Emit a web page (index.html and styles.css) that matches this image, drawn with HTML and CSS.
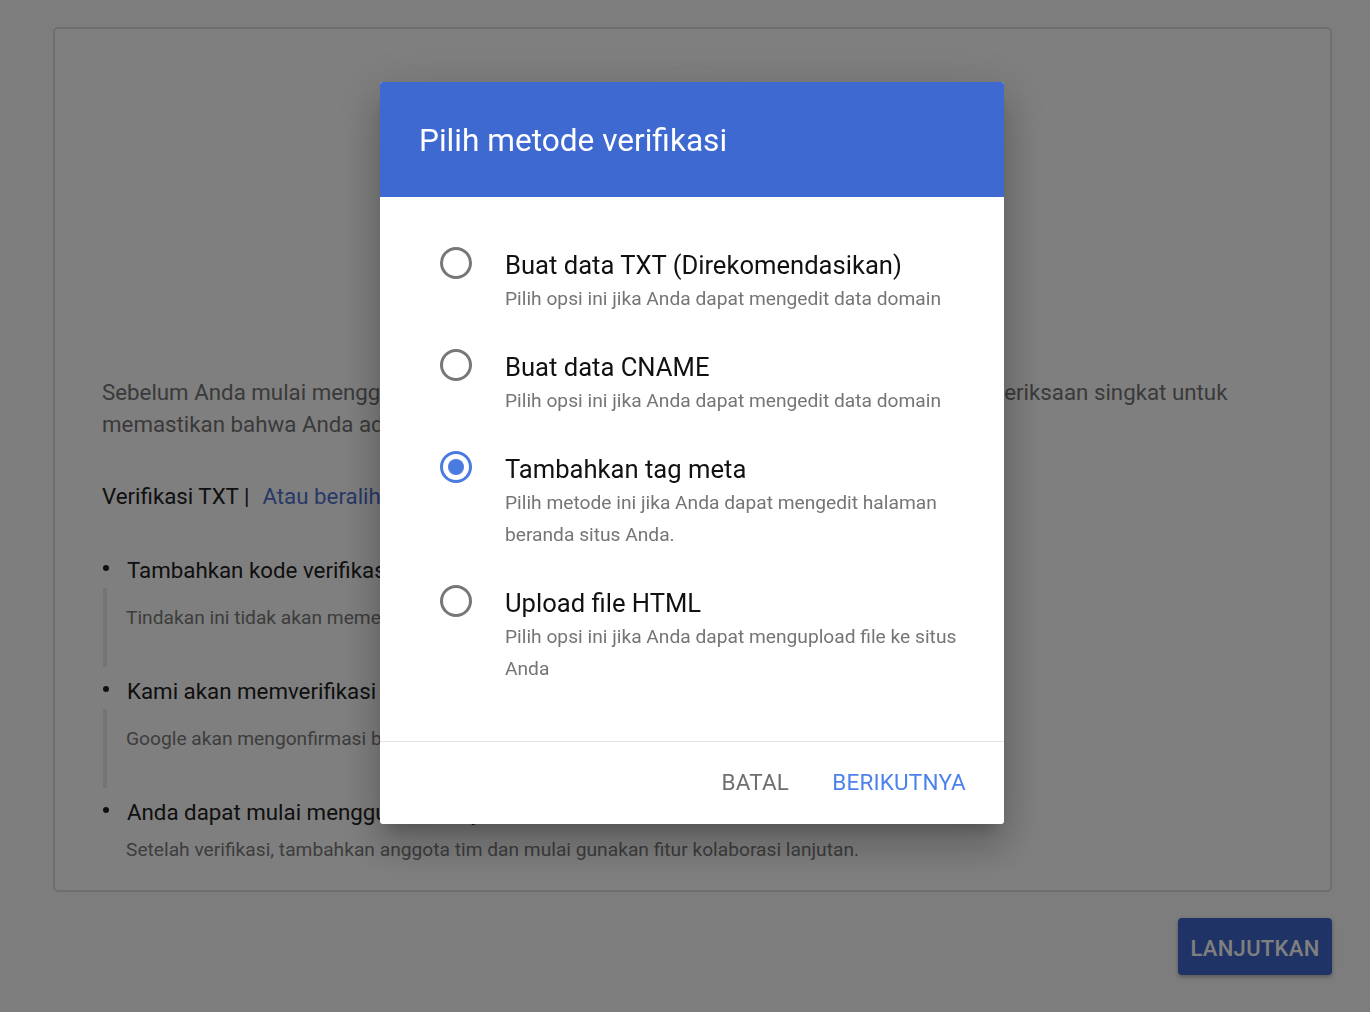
FILE: index.html
```html
<!DOCTYPE html>
<html lang="id">
<head>
<meta charset="utf-8">
<title>Verifikasi domain</title>
<link rel="stylesheet" href="styles.css">
</head>
<body>
<main class="page">
  <section class="card">
    <div class="logo-wrap"><div class="logo"></div></div>
    <p class="intro">Sebelum Anda mulai menggunakan layanan ini pada domain ini, kami perlu melakukan pemeriksaan singkat untuk<br>memastikan bahwa Anda adalah pemilik domain ini.</p>
    <div class="method-row">
      <span class="method">Verifikasi TXT |</span>
      <a class="switch" href="#">Atau beralih ke metode verifikasi lain</a>
    </div>
    <ul class="steps">
      <li class="step">
        <div class="step-title">Tambahkan kode verifikasi ke data DNS domain Anda</div>
        <div class="step-note bordered">Tindakan ini tidak akan memengaruhi situs atau email Anda.</div>
      </li>
      <li class="step">
        <div class="step-title">Kami akan memverifikasi kepemilikan domain Anda</div>
        <div class="step-note bordered">Google akan mengonfirmasi bahwa Anda adalah pemilik domain.</div>
      </li>
      <li class="step">
        <div class="step-title">Anda dapat mulai menggunakan layanan setelah diverifikasi</div>
        <div class="step-note">Setelah verifikasi, tambahkan anggota tim dan mulai gunakan fitur kolaborasi lanjutan.</div>
      </li>
    </ul>
  </section>
  <div class="actions">
    <button class="primary" type="button">LANJUTKAN</button>
  </div>
</main>

<div class="overlay">
  <div class="dialog" role="dialog">
    <header class="dialog-head">Pilih metode verifikasi</header>
    <div class="dialog-body">
      <label class="option">
        <span class="radio"></span>
        <span class="option-text">
          <span class="option-title">Buat data TXT (Direkomendasikan)</span>
          <span class="option-desc">Pilih opsi ini jika Anda dapat mengedit data domain</span>
        </span>
      </label>
      <label class="option">
        <span class="radio"></span>
        <span class="option-text">
          <span class="option-title">Buat data CNAME</span>
          <span class="option-desc">Pilih opsi ini jika Anda dapat mengedit data domain</span>
        </span>
      </label>
      <label class="option">
        <span class="radio checked"></span>
        <span class="option-text">
          <span class="option-title">Tambahkan tag meta</span>
          <span class="option-desc">Pilih metode ini jika Anda dapat mengedit halaman beranda situs Anda.</span>
        </span>
      </label>
      <label class="option">
        <span class="radio"></span>
        <span class="option-text">
          <span class="option-title">Upload file HTML</span>
          <span class="option-desc">Pilih opsi ini jika Anda dapat mengupload file ke situs Anda</span>
        </span>
      </label>
    </div>
    <footer class="dialog-foot">
      <button class="text-btn cancel" type="button">BATAL</button>
      <button class="text-btn next" type="button">BERIKUTNYA</button>
    </footer>
  </div>
</div>
</body>
</html>
```
FILE: styles.css
```css
* { box-sizing: border-box; }
html, body { margin: 0; padding: 0; }
body {
  background: #fafafa;
  font-family: Roboto, "Noto Sans", "Liberation Sans", sans-serif;
  width: 1370px;
  height: 1012px;
  overflow: hidden;
}
.page {
  padding: 27px 38px 0 53px;
}
.card {
  width: 1279px;
  height: 865px;
  background: #ffffff;
  border: 2px solid #dedede;
  border-radius: 5px;
  padding: 0 47px;
}
.logo-wrap {
  display: flex;
  justify-content: center;
  padding-top: 38px;
}
.logo {
  width: 140px;
  height: 140px;
  border-radius: 50%;
  background: #ffffff;
  box-shadow: 0 -1px 3px rgba(0,0,0,0.04);
}
.intro {
  margin: 169px 0 0;
  font-size: 22.3px;
  line-height: 32px;
  color: #757575;
  white-space: nowrap;
}
.method-row {
  margin-top: 40px;
  font-size: 22.3px;
  line-height: 32px;
  display: flex;
  gap: 13px;
}
.method { color: #212121; }
.switch { color: #4f72cf; text-decoration: none; }
.steps {
  list-style: none;
  margin: 43px 0 0;
  padding: 0;
}
.step { margin-bottom: 9px; }
.step-title {
  position: relative;
  padding-left: 25px;
  font-size: 22.3px;
  line-height: 30px;
  color: #212121;
  white-space: nowrap;
}
.step-title::before {
  content: "";
  position: absolute;
  left: 1px;
  top: 10px;
  width: 6px;
  height: 6px;
  border-radius: 50%;
  background: #212121;
}
.step-note {
  margin-top: 10px;
  padding-left: 24px;
  font-size: 19.2px;
  line-height: 26px;
  color: #7a7a7a;
  white-space: nowrap;
}
.step-note.bordered {
  margin: 3px 0 0 1px;
  border-left: 4px solid #e8e8e8;
  padding: 17px 0 36px 19px;
}

.actions {
  display: flex;
  justify-content: flex-end;
  margin-top: 26px;
}
.primary {
  width: 154px;
  height: 57px;
  border: none;
  border-radius: 4px;
  background: #3e66cc;
  color: #ffffff;
  font-family: inherit;
  font-size: 22px;
  font-weight: 500;
  letter-spacing: 0.3px;
  padding-top: 4px;
  box-shadow: 0 2px 4px rgba(0,0,0,0.3);
}

.overlay {
  position: fixed;
  inset: 0;
  background: rgba(0,0,0,0.5);
  display: flex;
  justify-content: flex-start;
  align-items: flex-start;
  padding: 82px 0 0 380px;
}
.dialog {
  width: 624px;
  background: #ffffff;
  border-radius: 3px;
  overflow: hidden;
  box-shadow: 0 11px 15px -7px rgba(0,0,0,0.2), 0 24px 38px 3px rgba(0,0,0,0.14), 0 9px 46px 8px rgba(0,0,0,0.12);
}
.dialog-head {
  height: 115px;
  background: #3e69d1;
  color: #ffffff;
  font-size: 31.6px;
  line-height: 117px;
  padding-left: 39px;
}
.dialog-body {
  padding: 50px 40px 56px 60px;
  display: flex;
  flex-direction: column;
  gap: 34px;
  border-bottom: 1px solid #e3e3e3;
}
.option {
  display: flex;
  align-items: flex-start;
  gap: 33px;
  cursor: pointer;
}
.radio {
  flex: none;
  width: 32px;
  height: 32px;
  border-radius: 50%;
  border: 3px solid #777777;
  display: flex;
  align-items: center;
  justify-content: center;
}
.radio.checked { border-color: #4a7be0; }
.radio.checked::after {
  content: "";
  width: 16px;
  height: 16px;
  border-radius: 50%;
  background: #4a7be0;
}
.option-text {
  display: flex;
  flex-direction: column;
}
.option-title {
  font-size: 25.6px;
  line-height: 36px;
  color: #111111;
}
.option-desc {
  font-size: 19.2px;
  line-height: 32px;
  color: #757575;
}
.dialog-foot {
  height: 82px;
  display: flex;
  justify-content: flex-end;
  align-items: center;
  gap: 43px;
  padding-right: 38px;
  padding-bottom: 2px;
}
.text-btn {
  border: none;
  background: none;
  padding: 0;
  font-family: inherit;
  font-size: 22.5px;
  font-weight: 400;
  letter-spacing: 0.2px;
}
.cancel { color: #6f6f6f; }
.next { color: #4d82ec; }
```
